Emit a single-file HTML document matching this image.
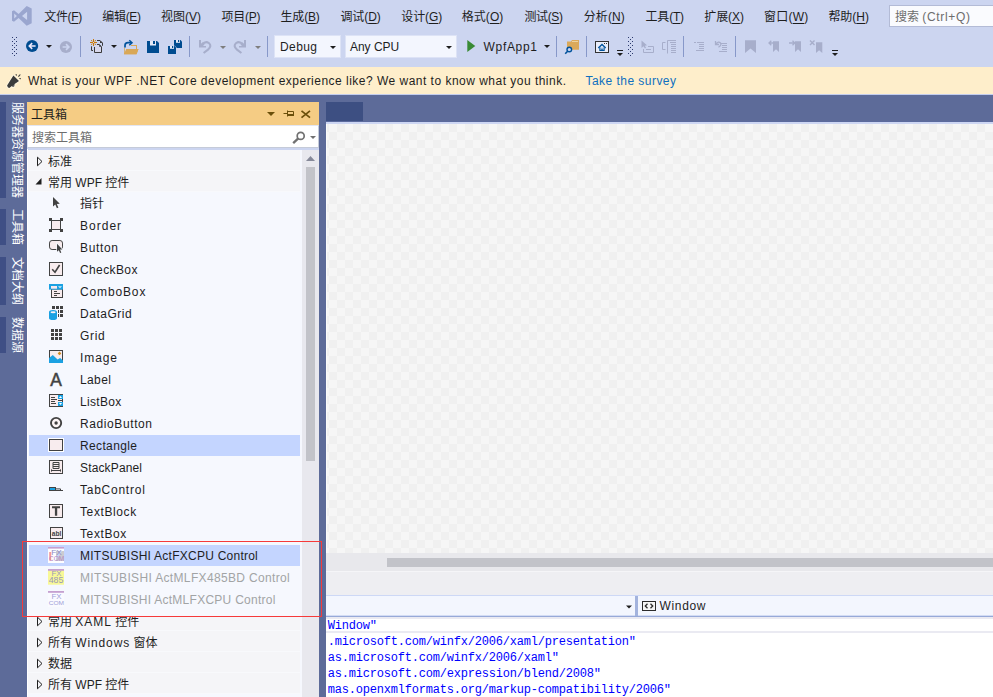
<!DOCTYPE html>
<html><head><meta charset="utf-8"><title>WpfApp1 - Microsoft Visual Studio</title>
<style>
*{box-sizing:border-box;margin:0;padding:0}
html,body{width:993px;height:697px;overflow:hidden;background:#5d6b99}
body{position:relative;font-family:"Liberation Sans","Noto Sans CJK SC",sans-serif;font-size:12px;color:#1e1e1e}
.abs{position:absolute}
svg{position:absolute;overflow:visible}
#top{left:0;top:0;width:993px;height:67px;background:#ccd5f0}
.mi{position:absolute;top:8px;height:18px;line-height:18px;font-size:12px;white-space:nowrap;color:#1e1e1e}
.mi u{text-decoration-thickness:1px;text-underline-offset:1.5px}
#search{left:889px;top:5px;width:110px;height:22px;background:#fafbfe;border:1px solid #b3bbd6}
#search>span{position:absolute;left:5px;top:2px;color:#6d6d6d;font-size:12px;line-height:18px;white-space:nowrap}
.tsep{position:absolute;top:36px;width:1px;height:21px;background:#8798c9}
.cmb{position:absolute;top:35px;height:23px;background:#f3f6fe;border:1px solid #dde3f6}
.tt{position:absolute;top:39px;font-size:12px;line-height:17px;white-space:nowrap;color:#1e1e1e}
#info{left:0;top:67px;width:993px;height:28px;background:#feeecb;border-bottom:1px solid #c3cdee}
#info .t{position:absolute;left:28px;top:6px;font-size:12px;line-height:16px;white-space:nowrap;color:#1e1e1e}
#info .l{position:absolute;left:585.5px;top:6px;font-size:12px;line-height:16px;white-space:nowrap;color:#0e70c0}
.stripbar{left:0;width:6px;background:#3f4f85}
.vt{position:absolute;left:9px;width:16px;writing-mode:vertical-rl;text-orientation:sideways;font-size:12px;color:#fff;line-height:16px;white-space:nowrap;letter-spacing:0}
#tb{left:27px;top:102px;width:292px;height:595px;background:#f6f8fe;overflow:hidden}
#tbh{left:0;top:0;width:292px;height:23px;background:#f5cc84}
#tbh .t{position:absolute;left:4px;top:4px;font-size:12px;line-height:18px;color:#1e1e1e}
#tbs{left:0;top:23px;width:292px;height:23px;background:#fff;border-top:1px solid #e3e6f2;border-left:1px solid #dfe4f3;border-bottom:1px solid #c5cbd9;border-right:1px solid #c5cbd9}
#tbs .t{position:absolute;left:4px;top:3px;font-size:12px;line-height:18px;color:#6d6d6d}
#tbsline{left:0;top:46px;width:292px;height:2px;background:#ccd5f0}
.row{position:absolute;left:2px;width:271px;height:21px}
.row .lb{position:absolute;left:51px;top:3px;font-size:12px;line-height:16px;white-space:nowrap;color:#1e1e1e}
.row.dis .lb{color:#a2a4a5}
.row.sel{background:#c4d5ff}
.grp{position:absolute;left:0;width:273px;background:#f5f5f8;border-bottom:1px solid #f8f9fc}
.grp .lb{position:absolute;left:21px;top:4px;font-size:12px;line-height:17px;white-space:nowrap;color:#1e1e1e}
#sb{left:275px;top:48px;width:17px;height:547px;background:#e8e8ee}
#thumb{left:279px;top:65px;width:9px;height:294px;background:#c2c3c9}
#doc{left:326px;top:102px;width:667px;height:595px;overflow:hidden}
#tab{left:0;top:0;width:37px;height:20px;background:#3d4f82}
#tabline{left:0;top:19px;width:667px;height:3px;background:linear-gradient(#5b6a9d 0,#5b6a9d 1px,#cdd6f3 1px)}
#checker{left:0;top:22px;width:667px;height:429px;border-left:1px solid #fbfbfb;background:repeating-conic-gradient(#f6f6f6 0% 25%,#f0f0f0 0% 50%) -6px 0/16px 16px}
#hsb{left:0;top:451px;width:667px;height:18px;background:#e8e8ec}
#hthumb{left:61px;top:456px;width:606px;height:9px;background:#c2c3c9}
#mid{left:0;top:469px;width:667px;height:24px;background:#eeeef2;border-top:1px solid #f5f5f8}
#combo{left:0;top:493px;width:667px;height:22px;background:#f3f6fe;border-top:1px solid #cdd8f6;border-bottom:1px solid #97a9d8;box-shadow:inset 0 -1px 0 #d3dcf4}
#csep{left:309px;top:0;width:3px;height:20px;background:#a3b3dd}
#cwin{position:absolute;left:333.5px;top:2px;font-size:12px;line-height:16px;color:#1e1e1e}
#code{left:0;top:515px;width:667px;height:80px;background:#fff;font-family:"Liberation Mono",monospace;color:#0000ff;font-size:12px;letter-spacing:-0.2px}
#curline{left:0;top:0px;width:667px;height:16px;border:2px solid #eaeaf2;border-left:none;border-right:none}
#codeclip{left:1px;top:0;width:666px;height:80px;overflow:hidden}
.cl{position:absolute;left:0.7px;white-space:pre;height:16px;line-height:16px}
#red{left:22px;top:541px;width:300px;height:76px;border:1px solid #f63a3a}

</style></head><body>
<div id="top" class="abs">
<svg style="left:0px;top:0px" width="40" height="32" viewBox="0 0 40 32" ><path fill="#9aa6cf" fill-rule="evenodd" d="M26.7 6 L31.7 8.5 L31.7 23.3 L26.7 25.8 L18.6 17.9 L14 21.7 L12 20.7 L12 11.2 L14 10.2 L18.6 14 Z M27.1 11.8 L27.1 20.1 L22 15.95 Z M14.2 13.5 L14.2 18.4 L16.9 15.95 Z"/></svg>
<span class="mi" id="m0" style="letter-spacing:-0.361px;left:44.3px">文件(<u>F</u>)</span>
<span class="mi" id="m1" style="letter-spacing:-0.279px;left:102.2px">编辑(<u>E</u>)</span>
<span class="mi" id="m2" style="letter-spacing:-0.029px;left:161.1px">视图(<u>V</u>)</span>
<span class="mi" id="m3" style="letter-spacing:-0.304px;left:221.6px">项目(<u>P</u>)</span>
<span class="mi" id="m4" style="letter-spacing:-0.179px;left:280.5px">生成(<u>B</u>)</span>
<span class="mi" id="m5" style="letter-spacing:-0.068px;left:340.4px">调试(<u>D</u>)</span>
<span class="mi" id="m6" style="letter-spacing:-0.111px;left:401.3px">设计(<u>G</u>)</span>
<span class="mi" id="m7" style="letter-spacing:0.064px;left:461.7px">格式(<u>O</u>)</span>
<span class="mi" id="m8" style="letter-spacing:-0.354px;left:524.4px">测试(<u>S</u>)</span>
<span class="mi" id="m9" style="letter-spacing:0.107px;left:583.7px">分析(<u>N</u>)</span>
<span class="mi" id="m10" style="letter-spacing:-0.186px;left:645.5px">工具(<u>T</u>)</span>
<span class="mi" id="m11" style="letter-spacing:-0.104px;left:704.3px">扩展(<u>X</u>)</span>
<span class="mi" id="m12" style="letter-spacing:0.218px;left:764.0px">窗口(<u>W</u>)</span>
<span class="mi" id="m13" style="letter-spacing:-0.018px;left:828.4px">帮助(<u>H</u>)</span>
<div id="search" class="abs"><span>搜索 <span style="letter-spacing:0.65px">(Ctrl+Q)</span></span></div>
<svg style="left:0px;top:0px" width="993" height="67" viewBox="0 0 993 67" ><g fill="#2c3a6e"><rect x="12" y="37" width="1" height="1"/><rect x="16" y="37" width="1" height="1"/><rect x="14" y="39" width="1" height="1"/><rect x="12" y="41" width="1" height="1"/><rect x="16" y="41" width="1" height="1"/><rect x="14" y="43" width="1" height="1"/><rect x="12" y="45" width="1" height="1"/><rect x="16" y="45" width="1" height="1"/><rect x="14" y="47" width="1" height="1"/><rect x="12" y="49" width="1" height="1"/><rect x="16" y="49" width="1" height="1"/><rect x="14" y="51" width="1" height="1"/><rect x="12" y="53" width="1" height="1"/><rect x="16" y="53" width="1" height="1"/><rect x="14" y="55" width="1" height="1"/></g><circle cx="32.1" cy="46" r="6.1" fill="#004c90"/><path d="M35.6 46 H29.6 M32.2 43.1 L29.3 46 L32.2 48.9" stroke="#ece8fb" stroke-width="1.6" fill="none"/><path d="M46 45 L52 45 L49.0 48.0 Z" fill="#1e1e1e"/><circle cx="65.9" cy="47" r="6.1" fill="#a7aecb"/><path d="M62.6 47 H68.6 M66 44.1 L68.9 47 L66 49.9" stroke="#ccd5f0" stroke-width="1.6" fill="none"/><path d="M95 45 H99.5 L101 46.5 V52 H95 Z" fill="#d8d8ec"/><path d="M97 40.5 H100 L102.5 43 V45.8" fill="none" stroke="#3a3a3a"/><path d="M100 40.5 V43 H102.5 Z" fill="#3a3a3a"/><path d="M97 44.5 H99.3 L101.5 46.7 V52.5 H94.5 V47" fill="none" stroke="#3a3a3a"/><path d="M99.2 44.5 V46.8 H101.5 Z" fill="#3a3a3a"/><path d="M91.5 46.3 V50.5 H93" fill="none" stroke="#3a3a3a"/><path d="M93.5 39 V46 M90 42.5 H97" stroke="#c8780a" stroke-width="1"/><g fill="#c8780a"><rect x="91.1" y="40.100" width="1" height="1"/><rect x="94.900" y="40.100" width="1" height="1"/><rect x="91.1" y="43.900" width="1" height="1"/><rect x="94.900" y="43.900" width="1" height="1"/><circle cx="93.5" cy="42.5" r="1.300"/></g><circle cx="93.5" cy="42.5" r="0.600" fill="#f4e6d0"/><path d="M111 45 L117 45 L114.0 48.0 Z" fill="#1e1e1e"/><path d="M124 47.500 V54.300 H136.500 L138.500 49 H126.500 L124.800 53 V47.500 Z" fill="#d9a857"/><path d="M131 46.5 V45 H137 V49 H136 V46 H131 Z" fill="#d9a857"/><path d="M124 54.300 L126.300 49 H138.500 L136.500 54.300 Z" fill="#d9a857"/><path d="M125 47.500 V45.500 Q125 42.700 128 42.700 H131" fill="none" stroke="#00539c" stroke-width="1.700"/><path d="M129.300 40.200 L132 42.700 L129.300 45.200" fill="none" stroke="#00539c" stroke-width="1.500"/><path d="M147 41 H157 L159 43 V53 H147 Z" fill="#004c90"/><rect x="150" y="41" width="6" height="4.5" fill="#e4e9f7"/><rect x="153" y="41" width="2" height="3" fill="#004c90"/><path d="M174 40 H180.500 L182 41.500 V48 H174 Z" fill="#004c90"/><rect x="176" y="40" width="4" height="2.800" fill="#e4e9f7"/><rect x="178" y="40" width="1.200" height="2" fill="#004c90"/><path d="M168 46 H174.500 L176 47.500 V54 H168 Z" fill="#004c90" stroke="#ccd5f0" stroke-width="1" paint-order="stroke"/><rect x="170" y="46" width="4" height="2.800" fill="#e4e9f7"/><rect x="172" y="46" width="1.200" height="2" fill="#004c90"/><path d="M199 40 H201 V43.800 L202.800 42.200 L204.500 44.600 L203 46 H206 V47.500 H199 Z" fill="#a7aecb"/><path d="M202.300 44.300 Q205.500 40.800 208.800 43 Q212.300 46 208 49.600 L203.600 53" fill="none" stroke="#a7aecb" stroke-width="2.100"/><path d="M220 46 L226 46 L223.0 49.0 Z" fill="#7e7e7e"/><path d="M246 40 H244 V43.800 L242.200 42.200 L240.500 44.600 L242 46 H239 V47.500 H246 Z" fill="#a7aecb"/><path d="M242.700 44.300 Q239.500 40.800 236.200 43 Q232.700 46 237 49.600 L241.400 53" fill="none" stroke="#a7aecb" stroke-width="2.100"/><path d="M255 46 L261 46 L258.0 49.0 Z" fill="#7e7e7e"/><path d="M467.300 40 L475.300 46 L467.300 52 Z" fill="#388a34"/><path d="M544 45 L550 45 L547.0 48.0 Z" fill="#1e1e1e"/><path d="M567 41.500 H571 L572 40 H579 V49.700 H567 Z" fill="#dba95a"/><rect x="572" y="41" width="6" height="1" fill="#eed3a0"/><circle cx="569.300" cy="49.500" r="2.300" fill="#ccd5f0" stroke="#00529c" stroke-width="1.400"/><path d="M567.600 51.300 L565.200 53.700" stroke="#00529c" stroke-width="1.600"/><rect x="595.500" y="41.500" width="13" height="11" fill="#e9edf9" stroke="#333"/><rect x="604" y="43" width="1" height="1" fill="#333"/><rect x="606" y="43" width="1" height="1" fill="#333"/><path d="M599.300 47.500 H604.700 V51 H599.300 Z" fill="#00539c"/><path d="M598.300 48 L602 44.500 L605.700 48" fill="none" stroke="#00539c" stroke-width="1.400"/><rect x="600.500" y="47.300" width="3" height="2.600" fill="#e9edf9"/><rect x="601.300" y="48.500" width="1.400" height="2.500" fill="#00539c"/><rect x="617" y="50" width="6" height="1" fill="#1e1e1e"/><path d="M617 53 L623 53 L620 56 Z" fill="#1e1e1e"/><g fill="#2c3a6e"><rect x="628" y="37" width="1" height="1"/><rect x="632" y="37" width="1" height="1"/><rect x="630" y="39" width="1" height="1"/><rect x="628" y="41" width="1" height="1"/><rect x="632" y="41" width="1" height="1"/><rect x="630" y="43" width="1" height="1"/><rect x="628" y="45" width="1" height="1"/><rect x="632" y="45" width="1" height="1"/><rect x="630" y="47" width="1" height="1"/><rect x="628" y="49" width="1" height="1"/><rect x="632" y="49" width="1" height="1"/><rect x="630" y="51" width="1" height="1"/><rect x="628" y="53" width="1" height="1"/><rect x="632" y="53" width="1" height="1"/><rect x="630" y="55" width="1" height="1"/></g><path d="M641.500 40.500 V48 L643.500 46.300 L645 48.500 L646 47.800 L644.800 45.800 L647 45.300 Z" fill="#a7aecb"/><path d="M643.500 49 V52.500 H653.500 V46.500 H648" fill="none" stroke="#a7aecb"/><path d="M646 49.500 H651" stroke="#a7aecb"/><path d="M667.500 40.500 V53.500 M665.500 42.500 H662.500 V49.500 H665.500 M667.500 40.500 H676 M670 42.500 H676 M671 44.500 H676 M671 46.500 H676 M671 48.500 H676 M671 50.500 H676 M671 52.500 H676" fill="none" stroke="#a7aecb"/><path d="M694 42.500 H696 M697 42.500 H704 M699 44.500 H704 M699 46.500 H704 M699 48.500 H704 M696 50.500 H704" fill="none" stroke="#a7aecb"/><path d="M715.500 41 V44.500 H719 M716 44 Q718.500 40.800 720.500 43 Q722 45 718.500 47.300" fill="none" stroke="#a7aecb" stroke-width="1.300"/><path d="M721 43.500 H727 M722 45.500 H727 M722 47.500 H727 M722 49.500 H727 M719 51.500 H727" fill="none" stroke="#a7aecb"/><path d="M745 40.200 H756 V53 L750.500 48.500 L745 53 Z" fill="#a7aecb"/><path d="M773 41.200 H779 V52 L776 49.300 L773 52 Z" fill="#a7aecb"/><path d="M774.500 43 H769.500 M771.300 40.800 L769 43 L771.300 45.200" fill="none" stroke="#a7aecb" stroke-width="1.300"/><path d="M795 41.200 H801 V52 L798 49.300 L795 52 Z" fill="#a7aecb"/><path d="M789 43 H794.500 M792.500 40.800 L794.800 43 L792.500 45.200" fill="none" stroke="#a7aecb" stroke-width="1.300"/><path d="M816 42.200 H822.300 V53 L819.100 50.300 L816 53 Z" fill="#a7aecb"/><path d="M810 40.500 L814.500 45 M814.500 40.500 L810 45" fill="none" stroke="#a7aecb" stroke-width="1.400"/><rect x="832" y="50" width="6" height="1" fill="#1e1e1e"/><path d="M832 53 L838 53 L835 56 Z" fill="#1e1e1e"/></svg><div class="tsep" style="left:80px"></div><div class="tsep" style="left:189px"></div><div class="tsep" style="left:267px"></div><div class="tsep" style="left:556px"></div><div class="tsep" style="left:586px"></div><div class="tsep" style="left:683px"></div><div class="tsep" style="left:735px"></div><div class="cmb" style="left:274px;width:67px"></div><div class="cmb" style="left:345px;width:112px"></div><span class="tt" id="tdebug" style="letter-spacing:0.406px;left:280px">Debug</span><span class="tt" id="tcpu" style="letter-spacing:-0.027px;left:350px">Any CPU</span><span class="tt" id="twpf" style="letter-spacing:0.69px;left:483.5px">WpfApp1</span><svg style="left:0px;top:0px" width="993" height="67" viewBox="0 0 993 67" ><path d="M330 46 L336 46 L333.0 49.0 Z" fill="#1e1e1e"/><path d="M446 46 L452 46 L449.0 49.0 Z" fill="#1e1e1e"/></svg>
</div>
<div id="info" class="abs"><svg style="left:6px;top:6px" width="17" height="16" viewBox="0 0 17 16" ><g stroke="#fff8e6" stroke-width="1.6" paint-order="stroke" stroke-linejoin="round"><path d="M7.4 2.6 L13 7.9 L8.6 11.1 L8.2 13.6 L6.5 14 L6.2 12.800 L3.300 14.900 Q1.500 15 1.100 12.600 Z" fill="#3b3b3b"/></g><path d="M7.500 12.500 L7.400 13.300" stroke="#9a9a9a" stroke-width="0.800"/><path d="M9.900 1.200 L10.600 2.600 M12.400 3.700 L14.300 1.500 M13.400 5.500 L14.900 5.700" stroke="#3b3b3b" stroke-width="1.100" fill="none"/></svg><span class="t" id="it" style="letter-spacing:0.483px">What is your WPF .NET Core development experience like? We want to know what you think.</span><span class="l" id="il" style="letter-spacing:0.461px">Take the survey</span></div>
<div class="abs stripbar" style="top:102px;height:96px"></div><div class="vt" style="top:102px;height:96px">服务器资源管理器</div>
<div class="abs stripbar" style="top:209px;height:36px"></div><div class="vt" style="top:209px;height:36px">工具箱</div>
<div class="abs stripbar" style="top:257px;height:48px"></div><div class="vt" style="top:257px;height:48px">文档大纲</div>
<div class="abs stripbar" style="top:317px;height:36px"></div><div class="vt" style="top:317px;height:36px">数据源</div>
<div id="tb" class="abs">
<div id="tbh" class="abs"><span class="t">工具箱</span><svg style="left:0px;top:0px" width="292" height="23" viewBox="0 0 292 23" ><path d="M240 10 L248 10 L244 14 Z" fill="#6b4f0a"/>
<path d="M256.500 11.500 H260 M260.500 8.500 V14.500 M260.500 9.500 H266.500 V13 M260.500 13 H267" stroke="#6b4f0a" stroke-width="1" fill="none"/><rect x="260" y="12" width="7" height="2" fill="#6b4f0a"/>
<path d="M274.5 8.8 L283 15.7 M283 8.8 L274.5 15.7" stroke="#6b4f0a" stroke-width="1.7" fill="none"/></svg></div>
<div id="tbs" class="abs"><span class="t">搜索工具箱</span><svg style="left:0px;top:0px" width="292" height="23" viewBox="0 0 292 23" ><circle cx="272.700" cy="9.900" r="3.500" fill="none" stroke="#717171" stroke-width="1.700"/><path d="M270.300 12.300 L265.200 17.200" stroke="#717171" stroke-width="2.300"/><path d="M282 10 L288 10 L285 13 Z" fill="#717171"/></svg></div>
<div id="tbsline" class="abs"></div>
<div class="grp" style="top:48px;height:21px"><svg style="left:9px;top:6px" width="8" height="12" viewBox="0 0 8 12" ><path d="M1.5 1.2 L6 5.5 L1.5 9.8 Z" fill="none" stroke="#1e1e1e" stroke-width="1"/></svg><span class="lb">标准</span></div>
<div class="grp" style="top:69px;height:21px"><svg style="left:8px;top:6px" width="8" height="10" viewBox="0 0 8 10" ><path d="M6.5 1 L6.5 7.5 L0.5 7.5 Z" fill="#1e1e1e"/></svg><span class="lb">常用 WPF 控件</span></div>
<div class="row" style="top:91px"><svg style="left:19px;top:2px" width="16" height="16" viewBox="0 0 16 16" ><path d="M5 2 L5 11.5 L7.3 9.6 L8.9 13.2 L10.4 12.5 L8.8 9 L11.8 8.8 Z" fill="#424242"/></svg><span class="lb" id="l0">指针</span></div>
<div class="row" style="top:113px"><svg style="left:19px;top:2px" width="16" height="16" viewBox="0 0 16 16" ><rect x="3.5" y="3.5" width="9" height="9" fill="#f8ecee" stroke="#424242"/><g fill="#424242"><rect x="1" y="1" width="3" height="3"/><rect x="12" y="1" width="3" height="3"/><rect x="1" y="12" width="3" height="3"/><rect x="12" y="12" width="3" height="3"/></g></svg><span class="lb" id="l1" style="letter-spacing:1.014px">Border</span></div>
<div class="row" style="top:135px"><svg style="left:19px;top:2px" width="16" height="16" viewBox="0 0 16 16" ><rect x="1.5" y="1.5" width="13" height="9" rx="2.6" fill="#f8ecee" stroke="#424242"/><path d="M9 4.700 L9 12.700 L10.800 11.200 L12.100 14 L13.300 13.400 L12 10.600 L14.400 10.400 Z" fill="#424242" stroke="#f6f8fe" stroke-width="1.4" paint-order="stroke"/></svg><span class="lb" id="l2" style="letter-spacing:0.639px">Button</span></div>
<div class="row" style="top:157px"><svg style="left:19px;top:2px" width="16" height="16" viewBox="0 0 16 16" ><rect x="1.5" y="1.5" width="13" height="13" fill="#f8ecee" stroke="#424242"/><path d="M4.200 8.300 L7 11.300 L11.600 4" stroke="#424242" stroke-width="1.6" fill="none"/></svg><span class="lb" id="l3" style="letter-spacing:0.385px">CheckBox</span></div>
<div class="row" style="top:179px"><svg style="left:19px;top:2px" width="16" height="16" viewBox="0 0 16 16" ><rect x="3.5" y="6" width="11" height="8.500" fill="#f8ecee" stroke="#424242"/><rect x="1" y="1" width="14" height="5.600" fill="#1ba1e2"/><rect x="3" y="3" width="6" height="2.700" fill="#f7e9ef"/><path d="M10 3.200 L14 3.200 L12 5.200 Z" fill="#d6eefb"/><path d="M6 8.500 H9 M6 10.500 H12 M6 12.500 H9" stroke="#424242" stroke-width="1"/></svg><span class="lb" id="l4" style="letter-spacing:0.861px">ComboBox</span></div>
<div class="row" style="top:201px"><svg style="left:19px;top:2px" width="16" height="16" viewBox="0 0 16 16" ><g fill="#424242"><rect x="4" y="1" width="3" height="3"/><rect x="8" y="1" width="3" height="3"/><rect x="12" y="1" width="3" height="3"/><rect x="10" y="5" width="1" height="3"/><rect x="12" y="5" width="3" height="3"/><rect x="10" y="9" width="1" height="3"/><rect x="12" y="9" width="3" height="3"/></g><path d="M1 7 a4 2 0 0 1 8 0 v6 a4 2 0 0 1 -8 0 Z" fill="#1ba1e2"/><ellipse cx="5.100" cy="7.200" rx="2.600" ry="1" fill="#fbeff2"/></svg><span class="lb" id="l5" style="letter-spacing:0.524px">DataGrid</span></div>
<div class="row" style="top:223px"><svg style="left:19px;top:2px" width="16" height="16" viewBox="0 0 16 16" ><g fill="#424242"><rect x="3" y="2" width="3" height="3"/><rect x="3" y="6" width="3" height="3"/><rect x="3" y="10" width="3" height="3"/><rect x="7" y="2" width="3" height="3"/><rect x="7" y="6" width="3" height="3"/><rect x="7" y="10" width="3" height="3"/><rect x="11" y="2" width="3" height="3"/><rect x="11" y="6" width="3" height="3"/><rect x="11" y="10" width="3" height="3"/></g></svg><span class="lb" id="l6" style="letter-spacing:0.676px">Grid</span></div>
<div class="row" style="top:245px"><svg style="left:19px;top:2px" width="16" height="16" viewBox="0 0 16 16" ><rect x="1.5" y="1.5" width="13" height="12" fill="#f8ecee" stroke="#424242"/><path d="M1 14 L1 9 L4.800 6 L9.600 10.500 L12.100 9.100 L15 11.600 L15 14 Z" fill="#1ba1e2"/><path d="M11.500 2.600 L13.300 4.400 L11.500 6.200 L9.700 4.400 Z" fill="#d08a1e"/></svg><span class="lb" id="l7" style="letter-spacing:0.91px">Image</span></div>
<div class="row" style="top:267px"><svg style="left:19px;top:2px" width="16" height="16" viewBox="0 0 16 16" ><text x="8" y="14.800" text-anchor="middle" font-family="Liberation Sans,sans-serif" font-weight="normal" stroke="#424242" stroke-width="0.55" font-size="19" fill="#424242" textLength="11.600" lengthAdjust="spacingAndGlyphs">A</text></svg><span class="lb" id="l8" style="letter-spacing:0.381px">Label</span></div>
<div class="row" style="top:289px"><svg style="left:19px;top:2px" width="16" height="16" viewBox="0 0 16 16" ><rect x="1.5" y="1.5" width="13" height="12" fill="#f8ecee" stroke="#424242"/><path d="M3 4.500 H7 M3 6.500 H9 M3 8.500 H7 M3 10.500 H8 M10 7.500 H15" stroke="#424242" stroke-width="1"/><rect x="10" y="2" width="5" height="4" fill="#1ba1e2"/><rect x="10" y="9" width="5" height="4" fill="#1ba1e2"/><path d="M11 5 L12.500 3 L14 5 Z M11 10 L12.500 12 L14 10 Z" fill="#fff"/></svg><span class="lb" id="l9" style="letter-spacing:0.323px">ListBox</span></div>
<div class="row" style="top:311px"><svg style="left:19px;top:2px" width="16" height="16" viewBox="0 0 16 16" ><circle cx="8.100" cy="8" r="5.100" fill="#fdf6f7" stroke="#424242" stroke-width="1.900"/><circle cx="8.100" cy="8" r="1.700" fill="#424242"/></svg><span class="lb" id="l10" style="letter-spacing:0.595px">RadioButton</span></div>
<div class="row sel" style="top:333px"><svg style="left:19px;top:2px" width="16" height="16" viewBox="0 0 16 16" ><rect x="0.5" y="1.500" width="15" height="13" fill="none" stroke="#fff"/><rect x="1.5" y="2.500" width="13" height="11" fill="#f8ecee" stroke="#424242" /></svg><span class="lb" id="l11" style="letter-spacing:0.357px">Rectangle</span></div>
<div class="row" style="top:355px"><svg style="left:19px;top:2px" width="16" height="16" viewBox="0 0 16 16" ><rect x="1.5" y="1.500" width="13" height="13" fill="#f8ecee" stroke="#424242"/><path d="M5 3.500 H11 V9.500 H5 Z M5 5.500 H11 M5 7.500 H11 M3.500 10.400 V12.600 M12.500 10.400 V12.600 M3.500 11.500 H12.500" fill="none" stroke="#424242" stroke-width="1"/></svg><span class="lb" id="l12" style="letter-spacing:0.144px">StackPanel</span></div>
<div class="row" style="top:377px"><svg style="left:19px;top:2px" width="16" height="16" viewBox="0 0 16 16" ><rect x="1.5" y="6.500" width="6" height="3" fill="#1ba1e2" stroke="#424242"/><path d="M7.500 7.900 H12.500 V9.500 M7.500 9.500 H15" fill="none" stroke="#424242" stroke-width="1"/></svg><span class="lb" id="l13" style="letter-spacing:0.752px">TabControl</span></div>
<div class="row" style="top:399px"><svg style="left:19px;top:2px" width="16" height="16" viewBox="0 0 16 16" ><rect x="1.5" y="1.500" width="13" height="13" fill="#f8ecee" stroke="#424242"/><path d="M4 3.200 H12 V5.300 H9.200 V12.700 H6.900 V5.300 H4 Z" fill="#424242"/></svg><span class="lb" id="l14" style="letter-spacing:0.605px">TextBlock</span></div>
<div class="row" style="top:421px"><svg style="left:19px;top:2px" width="16" height="16" viewBox="0 0 16 16" ><rect x="2.5" y="2.500" width="12" height="11" fill="#f8ecee" stroke="#424242"/><text x="8.600" y="10.600" text-anchor="middle" font-family="Liberation Sans,sans-serif" font-weight="bold" font-size="8" fill="#424242" textLength="9.600" lengthAdjust="spacingAndGlyphs">abl</text></svg><span class="lb" id="l15" style="letter-spacing:0.602px">TextBox</span></div>
<div class="row sel" style="top:443px"><svg style="left:19px;top:2px" width="16" height="16" viewBox="0 0 16 16" ><rect x="0" y="0" width="16" height="16" fill="#fdfdff"/><rect x="8" y="4" width="8" height="10" fill="#cbcbd0"/><path d="M8 10 L12 4 H14 L9 12 Z" fill="#c8d4f4"/><rect x="0" y="0" width="16" height="1.600" fill="#c5a0d0"/><rect x="1.200" y="5" width="2" height="8.600" fill="#f59a9a"/><text x="3.200" y="7.500" font-family="Liberation Sans,sans-serif" font-size="7.600" fill="#8c8cc4" textLength="10.500" lengthAdjust="spacingAndGlyphs">FX</text><text x="1" y="13.900" font-family="Liberation Sans,sans-serif" font-size="6.600" fill="#b487c4" textLength="15" lengthAdjust="spacingAndGlyphs">COM</text></svg><span class="lb" id="l16" style="letter-spacing:0.247px">MITSUBISHI ActFXCPU Control</span></div>
<div class="row dis" style="top:465px"><svg style="left:19px;top:2px" width="16" height="16" viewBox="0 0 16 16" ><rect x="0" y="0" width="16" height="15.700" fill="#f8f897"/><rect x="0" y="0" width="16" height="1.800" fill="#c5a0d0"/><text x="3.400" y="7.300" font-family="Liberation Sans,sans-serif" font-size="7" fill="#9a9ab8" textLength="10" lengthAdjust="spacingAndGlyphs">FX</text><text x="0.700" y="14.300" font-family="Liberation Sans,sans-serif" font-size="8.400" fill="#9a9ab8" textLength="14.700" lengthAdjust="spacingAndGlyphs">485</text></svg><span class="lb" id="l17" style="letter-spacing:0.346px">MITSUBISHI ActMLFX485BD Control</span></div>
<div class="row dis" style="top:487px"><svg style="left:19px;top:2px" width="16" height="16" viewBox="0 0 16 16" ><rect x="0" y="0" width="16" height="16" fill="#fafaff"/><rect x="0" y="0" width="16" height="1.800" fill="#c5a0d0"/><text x="3.400" y="7.900" font-family="Liberation Sans,sans-serif" font-size="7.400" fill="#a0a0d8" textLength="10" lengthAdjust="spacingAndGlyphs">FX</text><text x="0.700" y="14.100" font-family="Liberation Sans,sans-serif" font-size="6.200" fill="#a0a0d8" textLength="15.300" lengthAdjust="spacingAndGlyphs">COM</text></svg><span class="lb" id="l18" style="letter-spacing:0.263px">MITSUBISHI ActMLFXCPU Control</span></div>
<div class="grp" style="top:508px;height:21px"><svg style="left:9px;top:6px" width="8" height="12" viewBox="0 0 8 12" ><path d="M1.5 1.2 L6 5.5 L1.5 9.8 Z" fill="none" stroke="#1e1e1e" stroke-width="1"/></svg><span class="lb">常用 <span style="letter-spacing:1px">XAML</span> 控件</span></div>
<div class="grp" style="top:529px;height:21px"><svg style="left:9px;top:6px" width="8" height="12" viewBox="0 0 8 12" ><path d="M1.5 1.2 L6 5.5 L1.5 9.8 Z" fill="none" stroke="#1e1e1e" stroke-width="1"/></svg><span class="lb">所有 <span style="letter-spacing:0.86px">Windows</span> 窗体</span></div>
<div class="grp" style="top:550px;height:21px"><svg style="left:9px;top:6px" width="8" height="12" viewBox="0 0 8 12" ><path d="M1.5 1.2 L6 5.5 L1.5 9.8 Z" fill="none" stroke="#1e1e1e" stroke-width="1"/></svg><span class="lb">数据</span></div>
<div class="grp" style="top:571px;height:21px"><svg style="left:9px;top:6px" width="8" height="12" viewBox="0 0 8 12" ><path d="M1.5 1.2 L6 5.5 L1.5 9.8 Z" fill="none" stroke="#1e1e1e" stroke-width="1"/></svg><span class="lb">所有 WPF 控件</span></div>
<div class="abs" style="left:0;top:508px;width:275px;height:6px;background:#f7f8fd"></div>
<div class="abs" style="left:0;top:47px;width:1px;height:548px;background:#fff"></div>
<div id="sb" class="abs"></div><svg style="left:279px;top:54px" width="10" height="6" viewBox="0 0 10 6" ><path d="M0 5 L4.5 0 L9 5 Z" fill="#868999"/></svg><div id="thumb" class="abs"></div>
</div>
<div id="doc" class="abs">
<div id="tab" class="abs"></div><div id="tabline" class="abs"></div>
<div id="checker" class="abs"></div>
<div id="hsb" class="abs"></div><div id="hthumb" class="abs"></div>
<div id="mid" class="abs"></div>
<div id="combo" class="abs"><div id="csep" class="abs"></div><svg style="left:300px;top:9px" width="7" height="4" viewBox="0 0 7 4" ><path d="M0 0.5 L6 0.5 L3 3.5 Z" fill="#1e1e1e"/></svg><svg style="left:316px;top:5px" width="14" height="10" viewBox="0 0 14 10" ><rect x="0.5" y="0.5" width="13" height="9" fill="#f6f6f6" stroke="#2b2b2b"/><path d="M5.5 2.8 L3.3 5 L5.5 7.2 M8.5 2.8 L10.7 5 L8.5 7.2" stroke="#2b2b2b" stroke-width="1.3" fill="none"/></svg><span id="cwin" style="letter-spacing:0.662px">Window</span></div>
<div id="code" class="abs"><div id="curline" class="abs"></div><div id="codeclip" class="abs">
<div class="cl" style="top:1px">Window"</div>
<div class="cl" style="top:17px">.microsoft.com/winfx/2006/xaml/presentation"</div>
<div class="cl" style="top:33px">as.microsoft.com/winfx/2006/xaml"</div>
<div class="cl" style="top:49px">as.microsoft.com/expression/blend/2008"</div>
<div class="cl" style="top:65px">mas.openxmlformats.org/markup-compatibility/2006"</div>
</div></div></div>
<div id="red" class="abs"></div>
</body></html>
